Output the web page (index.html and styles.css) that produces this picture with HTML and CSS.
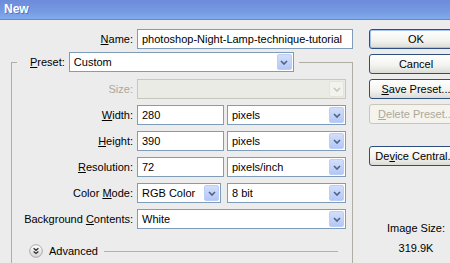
FILE: index.html
```html
<html>

<head>
    <meta http-equiv="Content-Type" content="text/html" charset="utf-8">
    <title>New</title>
    <link rel="stylesheet" href="styles.css">
</head>

<body>
    <div class="titlebar">New</div>

    <div class="dialog">
        <div class="main">
            <div class="name-row">
                <div class="label"><u>N</u>ame:</div>
                <div class="input">photoshop-Night-Lamp-technique-tutorial</div>
            </div>

            <fieldset class="group">
                <legend>
                    <span class="legend-label"><u>P</u>reset:</span>
                    <div class="select preset">
                        <span class="value">Custom</span>
                        <span class="arrow"><svg width="8" height="5" viewBox="0 0 8 5"><path d="M1 1 L4 4 L7 1" fill="none" stroke="#4d6185" stroke-width="1.6"/></svg></span>
                    </div>
                </legend>

                <div class="fields">
                    <div class="label disabled">Size:</div>
                    <div class="select disabled">
                        <span class="value"></span>
                        <span class="arrow"><svg width="8" height="5" viewBox="0 0 8 5"><path d="M1 1 L4 4 L7 1" fill="none" stroke="#c9c7ba" stroke-width="1.6"/></svg></span>
                    </div>

                    <div class="label"><u>W</u>idth:</div>
                    <div class="pair">
                        <div class="input short">280</div>
                        <div class="select unit">
                            <span class="value">pixels</span>
                            <span class="arrow"><svg width="8" height="5" viewBox="0 0 8 5"><path d="M1 1 L4 4 L7 1" fill="none" stroke="#4d6185" stroke-width="1.6"/></svg></span>
                        </div>
                    </div>

                    <div class="label"><u>H</u>eight:</div>
                    <div class="pair">
                        <div class="input short">390</div>
                        <div class="select unit">
                            <span class="value">pixels</span>
                            <span class="arrow"><svg width="8" height="5" viewBox="0 0 8 5"><path d="M1 1 L4 4 L7 1" fill="none" stroke="#4d6185" stroke-width="1.6"/></svg></span>
                        </div>
                    </div>

                    <div class="label"><u>R</u>esolution:</div>
                    <div class="pair">
                        <div class="input short">72</div>
                        <div class="select unit">
                            <span class="value">pixels/inch</span>
                            <span class="arrow"><svg width="8" height="5" viewBox="0 0 8 5"><path d="M1 1 L4 4 L7 1" fill="none" stroke="#4d6185" stroke-width="1.6"/></svg></span>
                        </div>
                    </div>

                    <div class="label">Color <u>M</u>ode:</div>
                    <div class="pair">
                        <div class="select mode">
                            <span class="value">RGB Color</span>
                            <span class="arrow"><svg width="8" height="5" viewBox="0 0 8 5"><path d="M1 1 L4 4 L7 1" fill="none" stroke="#4d6185" stroke-width="1.6"/></svg></span>
                        </div>
                        <div class="select unit">
                            <span class="value">8 bit</span>
                            <span class="arrow"><svg width="8" height="5" viewBox="0 0 8 5"><path d="M1 1 L4 4 L7 1" fill="none" stroke="#4d6185" stroke-width="1.6"/></svg></span>
                        </div>
                    </div>

                    <div class="label">Background <u>C</u>ontents:</div>
                    <div class="select">
                        <span class="value">White</span>
                        <span class="arrow"><svg width="8" height="5" viewBox="0 0 8 5"><path d="M1 1 L4 4 L7 1" fill="none" stroke="#4d6185" stroke-width="1.6"/></svg></span>
                    </div>
                </div>

                <div class="advanced">
                    <svg class="adv-icon" width="14" height="14" viewBox="0 0 14 14">
                        <defs>
                            <linearGradient id="advg" x1="0" y1="0" x2="0" y2="1">
                                <stop offset="0" stop-color="#ffffff"/>
                                <stop offset="1" stop-color="#d6d6d6"/>
                            </linearGradient>
                        </defs>
                        <circle cx="7" cy="7" r="6.3" fill="url(#advg)" stroke="#a8a8a8"/>
                        <path d="M4.6 4.3 L7 6.3 L9.4 4.3 M4.6 7.4 L7 9.4 L9.4 7.4" fill="none" stroke="#333" stroke-width="1.3"/>
                    </svg>
                    <span>Advanced</span>
                    <div class="rule"></div>
                </div>
            </fieldset>
        </div>

        <div class="side">
            <div class="btn default">OK</div>
            <div class="btn">Cancel</div>
            <div class="btn"><u>S</u>ave Preset...</div>
            <div class="btn disabled"><u>D</u>elete Preset...</div>
            <div class="btn device">De<u>v</u>ice Central...</div>
            <div class="image-size">Image Size:</div>
            <div class="image-size-value">319.9K</div>
        </div>
    </div>
</body>

</html>
```
FILE: styles.css
```css
html,
body {
    margin: 0;
    overflow: hidden;
}

body {
    width: 450px;
    height: 263px;
    background-color: #ececec;
    font-family: "Liberation Sans", Arial, sans-serif;
    font-size: 11px;
    color: #000;
}

.titlebar {
    height: 19px;
    line-height: 19px;
    padding-left: 4px;
    border-bottom: 1px solid #6787d4;
    background: linear-gradient(#6d8bdb, #759ae3 60%, #82abee);
    color: #fff;
    font-weight: bold;
    font-size: 12px;
    text-shadow: 1px 1px 0 rgba(40, 60, 140, 0.45);
}

.dialog {
    display: flex;
    width: 463px;
}

.main {
    width: 360px;
    padding-top: 9px;
}

.side {
    width: 94px;
    margin-left: 9px;
    padding-top: 9px;
    display: flex;
    flex-direction: column;
}

/* labels and controls */
.label {
    text-align: right;
    white-space: nowrap;
}

.label.disabled {
    color: #aca899;
}

.input,
.select {
    box-sizing: border-box;
    height: 20px;
    border: 1px solid #7f9db9;
    background-color: #fff;
    white-space: nowrap;
}

.input {
    line-height: 18px;
    padding-left: 4px;
}

.select {
    display: flex;
}

.select .value {
    flex: 1;
    line-height: 18px;
    padding-left: 4px;
}

.select .arrow {
    box-sizing: border-box;
    width: 15px;
    margin: 1px;
    border: 1px solid #bccdf7;
    border-radius: 2px;
    background: linear-gradient(#d2defc, #b4c7f5);
    display: flex;
    align-items: center;
    justify-content: center;
}

.select.disabled {
    border-color: #c9c7ba;
    background-color: #ebebe6;
}

.select.disabled .arrow {
    border-color: #e4e3dc;
    background: #f3f3ee;
}

.name-row {
    display: grid;
    grid-template-columns: 133px 216px;
    column-gap: 4px;
    align-items: center;
}

/* group box */
.group {
    box-sizing: border-box;
    width: 342px;
    margin: 3px 0 0 11px;
    padding: 0 0 5px 0;
    border: 1px solid #afada4;
    border-bottom: none;
}

.group legend {
    margin-left: 5px;
    padding: 0 5px 0 13px;
    display: flex;
    align-items: center;
    gap: 4px;
}

.preset {
    width: 225px;
}

.fields {
    display: grid;
    grid-template-columns: 121px 209px;
    grid-auto-rows: 20px;
    column-gap: 4px;
    row-gap: 6px;
    align-items: center;
    padding-top: 7px;
}

.pair {
    display: flex;
    justify-content: space-between;
}

.input.short {
    width: 87px;
}

.select.unit {
    width: 119px;
}

.select.mode {
    width: 84px;
}

.advanced {
    display: flex;
    align-items: center;
    height: 14px;
    margin: 15px 14px 0 17px;
    gap: 6px;
}

.adv-icon {
    flex: none;
}

.rule {
    flex: 1;
    border-top: 1px solid #b3b1a8;
}

/* buttons */
.btn {
    box-sizing: border-box;
    height: 20px;
    line-height: 18px;
    margin-bottom: 5px;
    border: 1px solid #2c4f7f;
    border-radius: 3px;
    background: linear-gradient(#ffffff, #f2f2ee 60%, #dcdcd6);
    text-align: center;
    white-space: nowrap;
}

.btn.default {
    box-shadow: inset 0 0 0 1px #a9c1ee;
}

.btn.disabled {
    border-color: #c9c7ba;
    background: #f4f3ee;
    color: #aca899;
}

.btn.device {
    margin-top: 17px;
}

.image-size,
.image-size-value {
    text-align: center;
    line-height: 14px;
}

.image-size {
    margin-top: 50px;
}

.image-size-value {
    margin-top: 6px;
}
```
